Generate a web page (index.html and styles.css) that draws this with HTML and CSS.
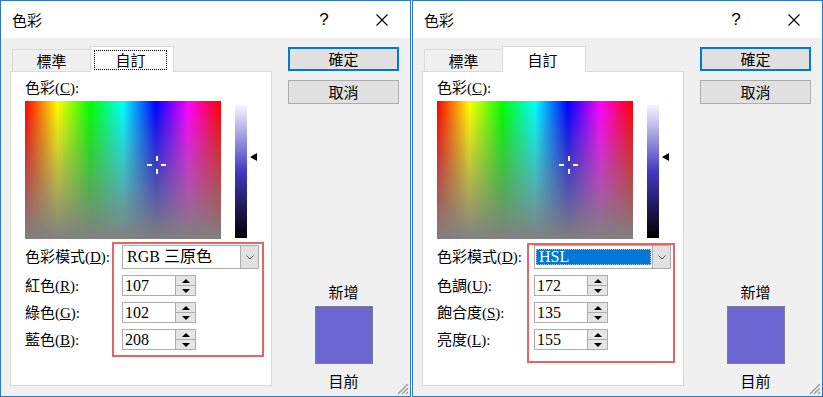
FILE: index.html
```html
<!DOCTYPE html>
<html lang="zh-Hant">
<head>
    <meta charset="UTF-8">
    <title>色彩</title>
    <link rel="stylesheet" href="styles.css">
</head>
<body>
<div class="desk">

    <!-- RGB mode dialog -->
    <div class="dialog">
        <div class="titlebar">
            <span class="title">色彩</span>
            <span class="help">?</span>
            <span class="close">
                <svg width="12" height="12" viewBox="0 0 12 12"><path d="M0.5 0.5 L11.5 11.5 M11.5 0.5 L0.5 11.5" stroke="#000" stroke-width="1.1"/></svg>
            </span>
        </div>
        <div class="content">
            <div class="main">
                <div class="tabs">
                    <div class="tab">標準</div>
                    <div class="tab active"><span class="focus">自訂</span></div>
                </div>
                <div class="panel">
                    <div class="caption">色彩(<u>C</u>):</div>
                    <div class="picker">
                        <div class="spectrum">
                            <svg class="cross" width="20" height="20" viewBox="0 0 20 20">
                                <rect x="0" y="9" width="5" height="2" fill="#fff"/>
                                <rect x="14" y="9" width="5" height="2" fill="#fff"/>
                                <rect x="9" y="1" width="2" height="5" fill="#fff"/>
                                <rect x="9" y="14" width="2" height="5" fill="#fff"/>
                            </svg>
                        </div>
                        <div class="lumwrap">
                            <div class="lum"></div>
                            <div class="arrow"></div>
                        </div>
                    </div>
                    <div class="fields">
                        <label>色彩模式(<u>D</u>):</label>
                        <div class="combo">
                            <div class="value">RGB 三原色</div>
                            <div class="drop"><svg width="8" height="5" viewBox="0 0 8 5"><path d="M0.5 0.5 L4 4 L7.5 0.5" fill="none" stroke="#555" stroke-width="1"/></svg></div>
                        </div>
                        <label>紅色(<u>R</u>):</label>
                        <div class="spin"><div class="num">107</div><div class="steps"><span class="step up"></span><span class="step down"></span></div></div>
                        <label>綠色(<u>G</u>):</label>
                        <div class="spin"><div class="num">102</div><div class="steps"><span class="step up"></span><span class="step down"></span></div></div>
                        <label>藍色(<u>B</u>):</label>
                        <div class="spin"><div class="num">208</div><div class="steps"><span class="step up"></span><span class="step down"></span></div></div>
                    </div>
                    <div class="mark"></div>
                </div>
            </div>
            <div class="side">
                <button class="btn default">確定</button>
                <button class="btn">取消</button>
                <div class="preview">
                    <div class="plabel">新增</div>
                    <div class="swatch"></div>
                    <div class="plabel current">目前</div>
                </div>
            </div>
        </div>
        <svg class="grip" width="12" height="12" viewBox="0 0 12 12">
            <path d="M11 1 L1 11 M11 5 L5 11 M11 9 L9 11" stroke="#a0a0a0" stroke-width="1.5"/>
        </svg>
    </div>

    <!-- HSL mode dialog -->
    <div class="dialog">
        <div class="titlebar">
            <span class="title">色彩</span>
            <span class="help">?</span>
            <span class="close">
                <svg width="12" height="12" viewBox="0 0 12 12"><path d="M0.5 0.5 L11.5 11.5 M11.5 0.5 L0.5 11.5" stroke="#000" stroke-width="1.1"/></svg>
            </span>
        </div>
        <div class="content">
            <div class="main">
                <div class="tabs">
                    <div class="tab">標準</div>
                    <div class="tab active"><span class="nofocus">自訂</span></div>
                </div>
                <div class="panel">
                    <div class="caption">色彩(<u>C</u>):</div>
                    <div class="picker">
                        <div class="spectrum">
                            <svg class="cross" width="20" height="20" viewBox="0 0 20 20">
                                <rect x="0" y="9" width="5" height="2" fill="#fff"/>
                                <rect x="14" y="9" width="5" height="2" fill="#fff"/>
                                <rect x="9" y="1" width="2" height="5" fill="#fff"/>
                                <rect x="9" y="14" width="2" height="5" fill="#fff"/>
                            </svg>
                        </div>
                        <div class="lumwrap">
                            <div class="lum"></div>
                            <div class="arrow"></div>
                        </div>
                    </div>
                    <div class="fields">
                        <label>色彩模式(<u>D</u>):</label>
                        <div class="combo">
                            <div class="value"><span class="sel">HSL</span></div>
                            <div class="drop"><svg width="8" height="5" viewBox="0 0 8 5"><path d="M0.5 0.5 L4 4 L7.5 0.5" fill="none" stroke="#555" stroke-width="1"/></svg></div>
                        </div>
                        <label>色調(<u>U</u>):</label>
                        <div class="spin"><div class="num">172</div><div class="steps"><span class="step up"></span><span class="step down"></span></div></div>
                        <label>飽合度(<u>S</u>):</label>
                        <div class="spin"><div class="num">135</div><div class="steps"><span class="step up"></span><span class="step down"></span></div></div>
                        <label>亮度(<u>L</u>):</label>
                        <div class="spin"><div class="num">155</div><div class="steps"><span class="step up"></span><span class="step down"></span></div></div>
                    </div>
                    <div class="mark alt"></div>
                </div>
            </div>
            <div class="side">
                <button class="btn default">確定</button>
                <button class="btn">取消</button>
                <div class="preview">
                    <div class="plabel">新增</div>
                    <div class="swatch"></div>
                    <div class="plabel current">目前</div>
                </div>
            </div>
        </div>
        <svg class="grip" width="12" height="12" viewBox="0 0 12 12">
            <path d="M11 1 L1 11 M11 5 L5 11 M11 9 L9 11" stroke="#a0a0a0" stroke-width="1.5"/>
        </svg>
    </div>

</div>
</body>
</html>
```

FILE: styles.css
```css
* {
    box-sizing: border-box;
}

body {
    margin: 0;
    background-color: #ffffff;
    color: #000000;
    font-family: "Liberation Serif", "Noto Sans CJK TC", serif;
    font-size: 15px;
}

.desk {
    display: flex;
    gap: 1px;
}

/* one dialog window */
.dialog {
    position: relative;
    width: 411px;
    height: 397px;
    border: 1px solid #2b79c8;
    background-color: #f0f0f0;
    display: flex;
    flex-direction: column;
}

.titlebar {
    height: 37px;
    background-color: #ffffff;
    display: flex;
    align-items: center;
    padding-left: 11px;
}

.title {
    font-family: "Noto Sans CJK TC", sans-serif;
    font-size: 15px;
    line-height: 18px;
}

.help {
    margin-left: auto;
    width: 58px;
    text-align: center;
    font-family: "Liberation Sans", sans-serif;
    font-size: 17px;
}

.close {
    width: 57px;
    display: flex;
    justify-content: center;
}

.content {
    flex: 1;
    display: flex;
    gap: 16px;
    padding: 8px 11px 10px 9px;
}

.main {
    width: 262px;
    display: flex;
    flex-direction: column;
}

/* tabs */
.tabs {
    display: flex;
    align-items: flex-end;
    height: 25px;
    padding-left: 2px;
}

.tab {
    width: 78px;
    height: 22px;
    border: 1px solid #d9d9d9;
    border-bottom: none;
    border-right: none;
    background-color: #f0f0f0;
    font-family: "Noto Sans CJK TC", sans-serif;
    font-size: 15px;
    line-height: 21px;
    text-align: center;
}

.tab.active {
    width: 84px;
    height: 26px;
    margin-bottom: -1px;
    position: relative;
    z-index: 1;
    background-color: #ffffff;
    border-right: 1px solid #d9d9d9;
}

.focus,
.nofocus {
    display: block;
    margin: 3px 6px 1px 3px;
    height: 20px;
    line-height: 18px;
    border: 1px dotted transparent;
}

.focus {
    border-color: #000000;
}

.panel {
    position: relative;
    flex: 1;
    background-color: #ffffff;
    border: 1px solid #d9d9d9;
    padding: 7px 0 0 14px;
}

.caption {
    line-height: 18px;
}

u {
    text-decoration: underline;
    text-underline-offset: 1px;
}

.picker {
    display: flex;
    margin-top: 4px;
}

.spectrum {
    position: relative;
    width: 196px;
    height: 138px;
    background:
        linear-gradient(to bottom, rgba(128, 128, 128, 0), #808080),
        linear-gradient(to right, #ff0000, #ffff00, #00ff00, #00ffff, #0000ff, #ff00ff, #ff0000);
}

.cross {
    position: absolute;
    left: 122px;
    top: 54px;
}

.lumwrap {
    position: relative;
    margin-left: 14px;
    margin-top: 4px;
}

.lum {
    width: 12px;
    height: 133px;
    background: linear-gradient(to bottom, #f6f6fc, #4438c2 50%, #000000);
}

.arrow {
    position: absolute;
    left: 15px;
    top: 48px;
    width: 0;
    height: 0;
    border-top: 4px solid transparent;
    border-bottom: 4px solid transparent;
    border-right: 7px solid #000000;
}

/* mode and value rows */
.fields {
    display: grid;
    grid-template-columns: 97px 137px;
    row-gap: 6px;
    align-items: center;
    margin-top: 6px;
}

.fields label {
    line-height: 18px;
}

.combo {
    height: 24px;
    border: 1px solid #adadad;
    background-color: #ffffff;
    display: flex;
}

.combo .value {
    flex: 1;
    padding-left: 4px;
    line-height: 22px;
    font-size: 16px;
    white-space: nowrap;
}

.sel {
    display: block;
    margin: 3px 1px 3px -3px;
    height: 16px;
    line-height: 14px;
    padding-left: 2px;
    background-color: #0078d7;
    color: #ffffff;
    border: 1px dotted #9cc8ee;
}

.drop {
    width: 18px;
    background-color: #e1e1e1;
    border-left: 1px solid #adadad;
    display: flex;
    align-items: center;
    justify-content: center;
}

.spin {
    width: 74px;
    height: 21px;
    border: 1px solid #adadad;
    background-color: #ffffff;
    display: flex;
}

.num {
    flex: 1;
    padding-left: 2px;
    font-size: 16px;
    line-height: 19px;
}

.steps {
    width: 20px;
    display: flex;
    flex-direction: column;
    border-left: 1px solid #adadad;
}

.step {
    flex: 1;
    background-color: #e5e5e5;
    display: flex;
    align-items: center;
    justify-content: center;
}

.step.down {
    border-top: 1px solid #adadad;
}

.step::after {
    content: "";
    width: 0;
    height: 0;
    border-left: 4px solid transparent;
    border-right: 4px solid transparent;
}

.step.up::after {
    border-bottom: 4px solid #000000;
}

.step.down::after {
    border-top: 4px solid #000000;
}

/* red annotation box */
.mark {
    position: absolute;
    left: 101px;
    top: 170px;
    width: 152px;
    height: 115px;
    border: 2px solid #e46562;
}

.mark.alt {
    left: 104px;
    top: 171px;
    width: 148px;
    height: 120px;
}

/* buttons and preview */
.side {
    width: 111px;
    display: flex;
    flex-direction: column;
}

.btn {
    height: 24px;
    margin-top: 1px;
    border: 1px solid #adadad;
    background-color: #e1e1e1;
    font-family: "Noto Sans CJK TC", sans-serif;
    font-size: 15px;
    line-height: 20px;
    padding: 0;
    color: #000000;
}

.btn + .btn {
    margin-top: 9px;
}

.btn.default {
    border: 2px solid #0078d7;
}

.preview {
    margin-top: auto;
    margin-bottom: -4px;
    display: flex;
    flex-direction: column;
    align-items: center;
}

.plabel {
    line-height: 18px;
    font-family: "Noto Sans CJK TC", sans-serif;
}

.swatch {
    width: 58px;
    height: 58px;
    margin-top: 5px;
    background-color: #6b66d0;
    border: 1px solid #7d7d8f;
}

.plabel.current {
    margin-top: 8px;
}

.grip {
    position: absolute;
    right: 1px;
    bottom: 1px;
}
```
